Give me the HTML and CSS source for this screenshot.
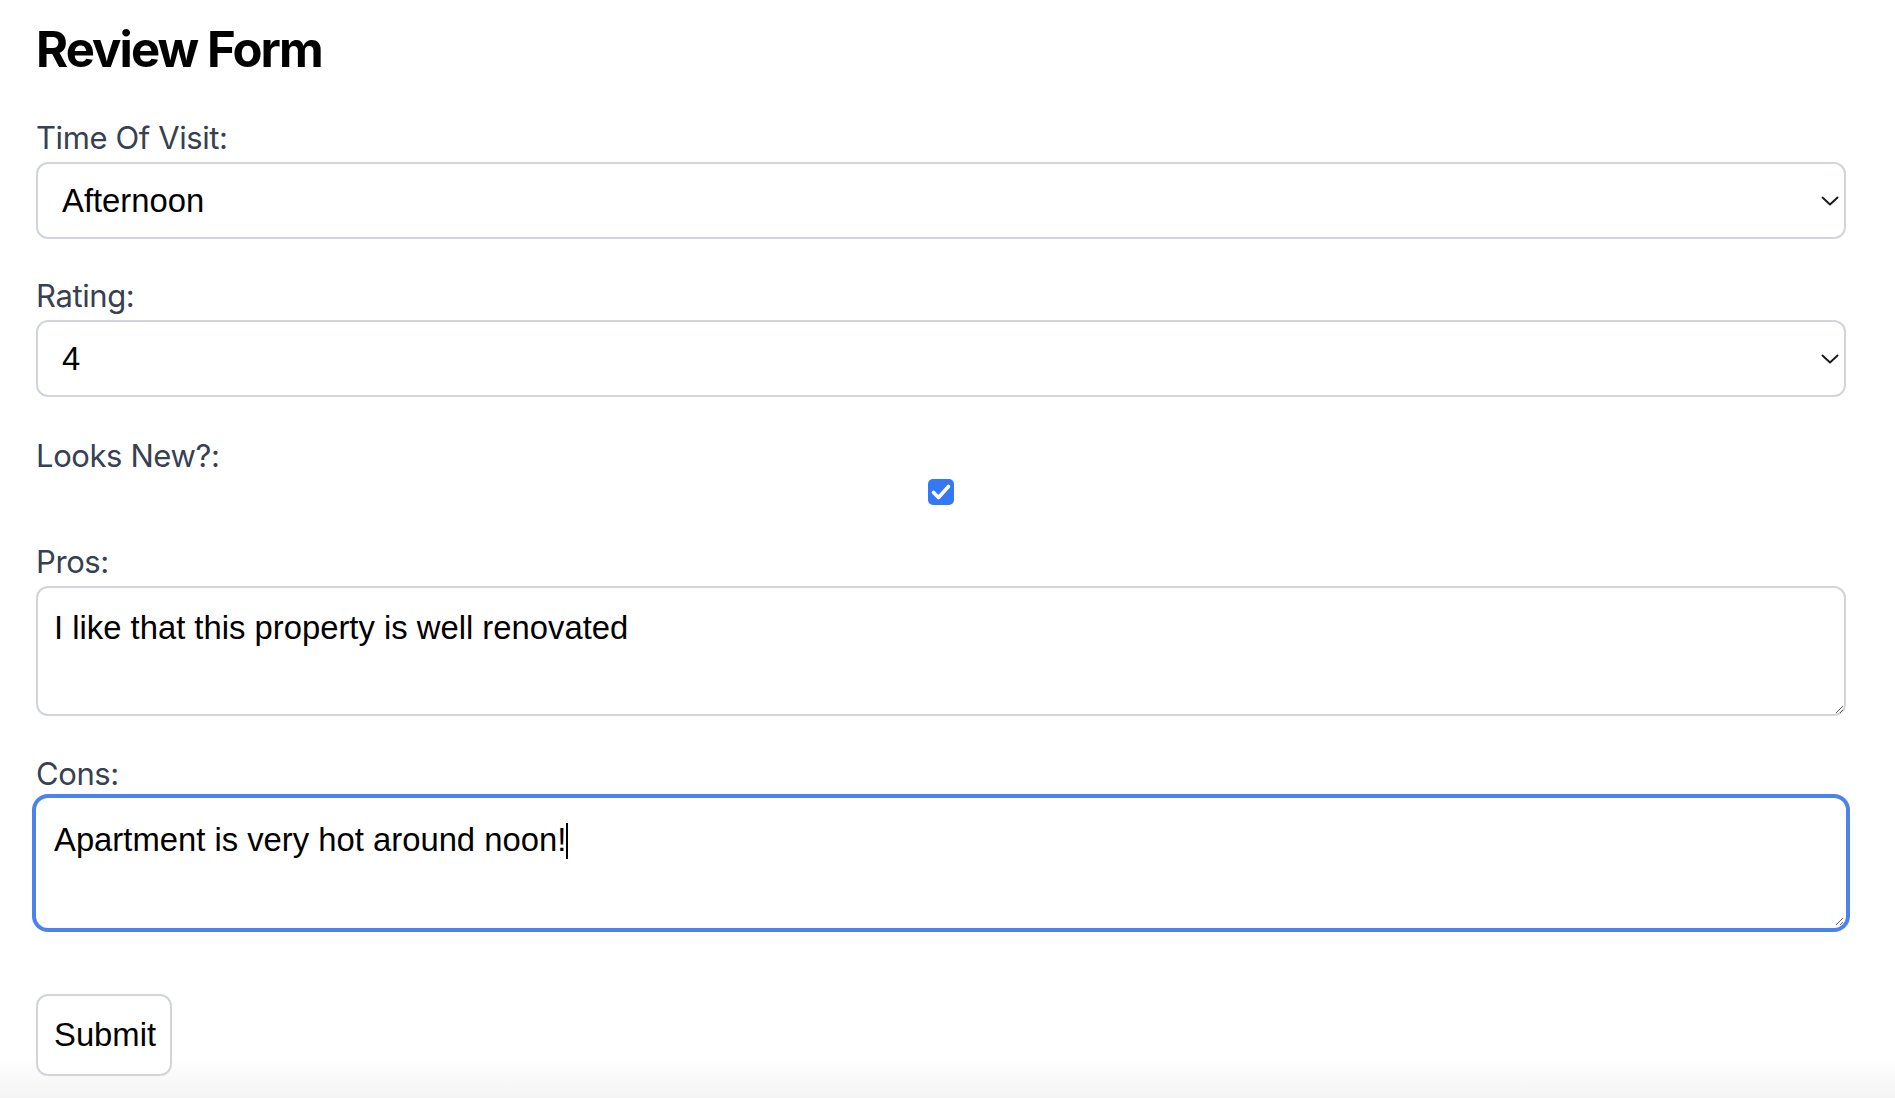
FILE: index.html
```html
<!DOCTYPE html>
<html lang="en">
<head>
<meta charset="utf-8">
<title>Review Form</title>
<link rel="stylesheet" href="styles.css">
</head>
<body>
<main class="page">
  <h1 class="title">Review Form</h1>
  <form class="form">
    <div class="field">
      <label class="label" for="time">Time Of Visit:</label>
      <div class="select-wrap">
        <select id="time" class="control select">
          <option>Morning</option>
          <option selected>Afternoon</option>
          <option>Evening</option>
        </select>
        <svg class="chevron" width="18" height="10" viewBox="0 0 18 10"><polyline points="1.5,1.5 9,8.5 16.5,1.5" fill="none" stroke="#1a1a1a" stroke-width="1.9" stroke-linecap="round" stroke-linejoin="round"/></svg>
      </div>
    </div>
    <div class="field">
      <label class="label" for="rating">Rating:</label>
      <div class="select-wrap">
        <select id="rating" class="control select">
          <option>1</option>
          <option>2</option>
          <option>3</option>
          <option selected>4</option>
          <option>5</option>
        </select>
        <svg class="chevron" width="18" height="10" viewBox="0 0 18 10"><polyline points="1.5,1.5 9,8.5 16.5,1.5" fill="none" stroke="#1a1a1a" stroke-width="1.9" stroke-linecap="round" stroke-linejoin="round"/></svg>
      </div>
    </div>
    <div class="field field-check">
      <label class="label" for="new">Looks New?:</label>
      <div class="check-row">
        <span class="checkbox">
          <input id="new" class="checkbox-input" type="checkbox" checked>
          <svg class="checkbox-mark" width="26" height="26" viewBox="0 0 26 26"><polyline points="5.5,13.5 10.5,18.5 20.5,7.5" fill="none" stroke="#fff" stroke-width="3.6" stroke-linecap="round" stroke-linejoin="round"/></svg>
        </span>
      </div>
    </div>
    <div class="field field-pros">
      <label class="label" for="pros">Pros:</label>
      <textarea id="pros" class="control textarea">I like that this property is well renovated</textarea>
    </div>
    <div class="field field-cons">
      <label class="label" for="cons">Cons:</label>
      <div class="textarea-wrap">
        <textarea id="cons" class="control textarea is-focused">Apartment is very hot around noon!</textarea>
        <span class="caret"></span>
      </div>
    </div>
    <button type="button" class="button">Submit</button>
  </form>
</main>
</body>
</html>
```

FILE: styles.css
```css
html, body {
  margin: 0;
  padding: 0;
}

body {
  min-height: 100vh;
  background: linear-gradient(to bottom, #ffffff calc(100% - 42px), #f4f4f4 100%);
  font-family: "Liberation Sans", Arial, sans-serif;
  color: #000;
}

.page {
  width: 1810px;
  padding: 0 0 0 36px;
}

.title {
  margin: 0;
  padding-top: 19px;
  font-family: Inter, "Noto Sans", sans-serif;
  font-weight: 700;
  font-size: 49px;
  line-height: 62px;
  letter-spacing: -1.9px;
  color: #000;
}

.form {
  display: flex;
  flex-direction: column;
  margin-top: 33px;
}

.field {
  display: flex;
  flex-direction: column;
  margin-bottom: 33px;
}

.field-check {
  margin-top: 2px;
  margin-bottom: 32px;
}

.field-pros {
  margin-bottom: 34px;
}

.field-cons {
  margin-bottom: 0;
}

.label {
  font-family: Inter, "Noto Sans", sans-serif;
  font-size: 31px;
  line-height: 48px;
  letter-spacing: -0.4px;
  color: #374151;
}

.control {
  box-sizing: border-box;
  width: 100%;
  margin: 0;
  border: 2px solid #d1d5db;
  border-radius: 12px;
  background: #fff;
  color: #000;
  font-family: "Liberation Sans", Arial, sans-serif;
  font-size: 32.8px;
  outline: none;
}

.select-wrap {
  position: relative;
}

.select {
  display: block;
  appearance: none;
  -webkit-appearance: none;
  height: 77px;
  padding: 0 60px 0 24px;
  line-height: 37px;
}

.chevron {
  position: absolute;
  right: 7px;
  top: 34px;
  pointer-events: none;
}

.check-row {
  display: flex;
  justify-content: center;
  height: 26px;
}

.checkbox {
  position: relative;
  width: 26px;
  height: 26px;
  margin-top: -1px;
}

.checkbox-input {
  appearance: none;
  -webkit-appearance: none;
  display: block;
  width: 26px;
  height: 26px;
  margin: 0;
  border-radius: 5px;
  background: #3478f6;
}

.checkbox-mark {
  position: absolute;
  left: 0;
  top: 0;
  pointer-events: none;
}

.textarea {
  display: block;
  height: 130px;
  padding: 16px;
  line-height: 48px;
  resize: vertical;
}

.textarea-wrap {
  position: relative;
}

.textarea.is-focused {
  border-color: #ffffff;
  box-shadow: 0 0 0 4px #4c82ec;
}

.caret {
  position: absolute;
  left: 530px;
  top: 25px;
  width: 2px;
  height: 36px;
  background: #000;
}

.button {
  align-self: flex-start;
  margin-top: 66px;
  box-sizing: border-box;
  width: 136px;
  height: 82px;
  padding: 0 16px;
  border: 2px solid #d1d5db;
  border-radius: 12px;
  background: #fff;
  color: #000;
  font-family: "Liberation Sans", Arial, sans-serif;
  font-size: 32.8px;
  line-height: 48px;
  text-align: left;
}
```
